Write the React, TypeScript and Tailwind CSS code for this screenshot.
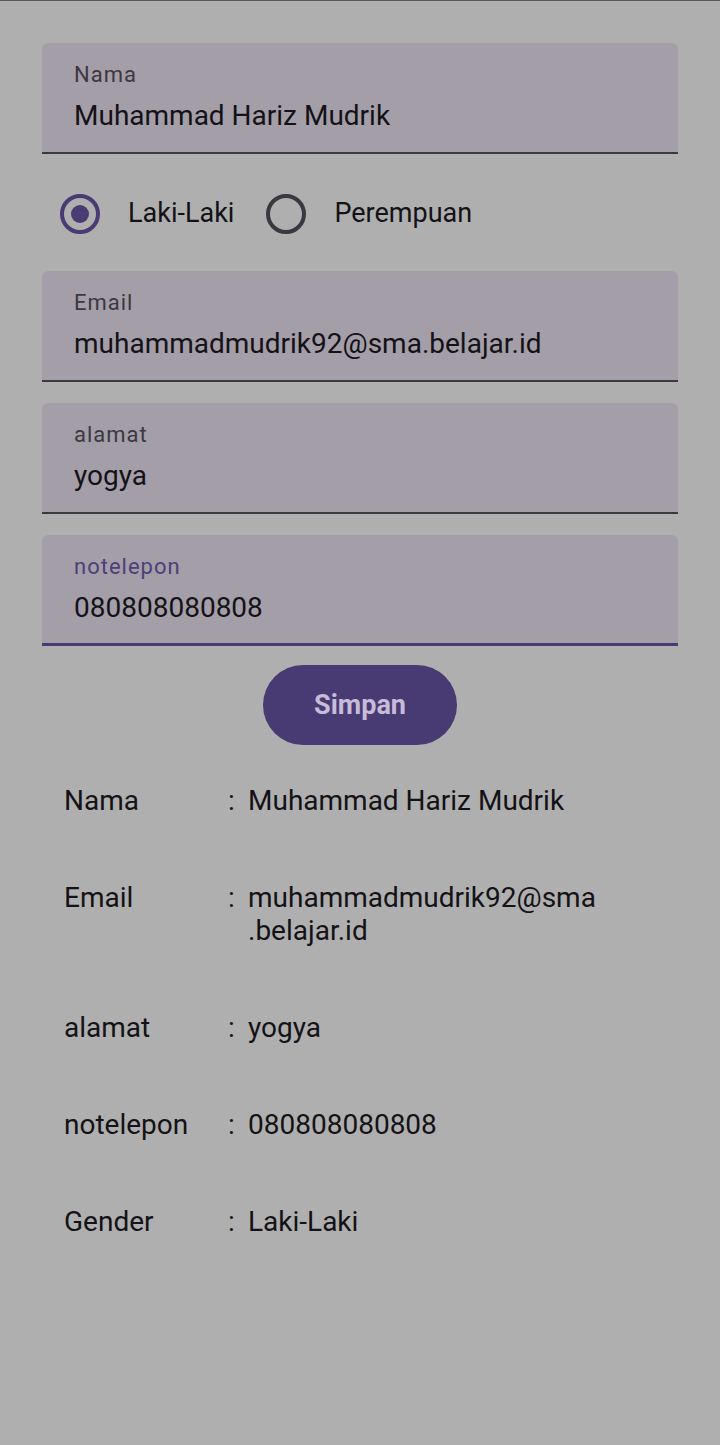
import React from "react";

const font = { fontFamily: "Roboto, 'Noto Sans', sans-serif" };

type FieldProps = { label: string; value: string; focused?: boolean };

const Field = ({ label, value, focused }: FieldProps) => (
  <div
    className={
      focused
        ? "h-[111px] rounded-t-[6px] bg-[#a39ea8] border-b-[3px] border-[#4a3b74] px-8 pt-[20px]"
        : "h-[111px] rounded-t-[6px] bg-[#a39ea8] border-b-2 border-[#3c3a40] px-8 pt-[20px]"
    }
  >
    <div
      className={
        focused
          ? "text-[22px] leading-[24px] tracking-[1px] text-[#4d3f79]"
          : "text-[22px] leading-[24px] tracking-[1px] text-[#3c3842]"
      }
    >
      {label}
    </div>
    <div className="mt-[12px] text-[28px] leading-[34px] text-[#141216]">{value}</div>
  </div>
);

const Radio = ({ checked }: { checked?: boolean }) => (
  <div
    className={
      checked
        ? "w-10 h-10 rounded-full border-4 border-[#4a3b74] flex items-center justify-center"
        : "w-10 h-10 rounded-full border-4 border-[#3a3840]"
    }
  >
    {checked && <div className="w-[18px] h-[18px] rounded-full bg-[#4a3b74]" />}
  </div>
);

// zero-width space lets the email wrap before ".belajar.id" like on the device
const rows: [string, string][] = [
  ["Nama", "Muhammad Hariz Mudrik"],
  ["Email", "muhammadmudrik92@sma\u200B.belajar.id"],
  ["alamat", "yogya"],
  ["notelepon", "080808080808"],
  ["Gender", "Laki-Laki"],
];

export default function App() {
  return (
    <div style={font} className="w-[720px] h-[1445px] bg-[#afafaf] border-t border-[#5a5a5a] text-[#111]">
      <div className="px-[42px] pt-[42px]">
        <Field label="Nama" value="Muhammad Hariz Mudrik" />

        <div className="flex items-center h-[117px] pl-[18px] pt-[2px] text-[27px]">
          <Radio checked />
          <span className="ml-[28px] text-[#141216]">Laki-Laki</span>
          <div className="ml-[32px]">
            <Radio />
          </div>
          <span className="ml-[28px] text-[#141216]">Perempuan</span>
        </div>

        <div className="flex flex-col gap-[21px]">
          <Field label="Email" value="muhammadmudrik92@sma.belajar.id" />
          <Field label="alamat" value="yogya" />
          <Field label="notelepon" value="080808080808" focused />
        </div>

        <div className="flex justify-center mt-[19px]">
          <button className="w-[194px] h-[80px] rounded-full bg-[#483a72] text-[#c6bcd8] text-[27px] font-bold">
            Simpan
          </button>
        </div>

        <div className="mt-[39px] pl-[22px] flex flex-col gap-[64px] text-[28px] leading-[33px] text-[#141216]">
          {rows.map(([k, v]) => (
            <div key={k} className="flex">
              <div className="w-[164px]">{k}</div>
              <div className="w-[20px]">:</div>
              <div className="w-[390px]">{v}</div>
            </div>
          ))}
        </div>
      </div>
    </div>
  );
}
